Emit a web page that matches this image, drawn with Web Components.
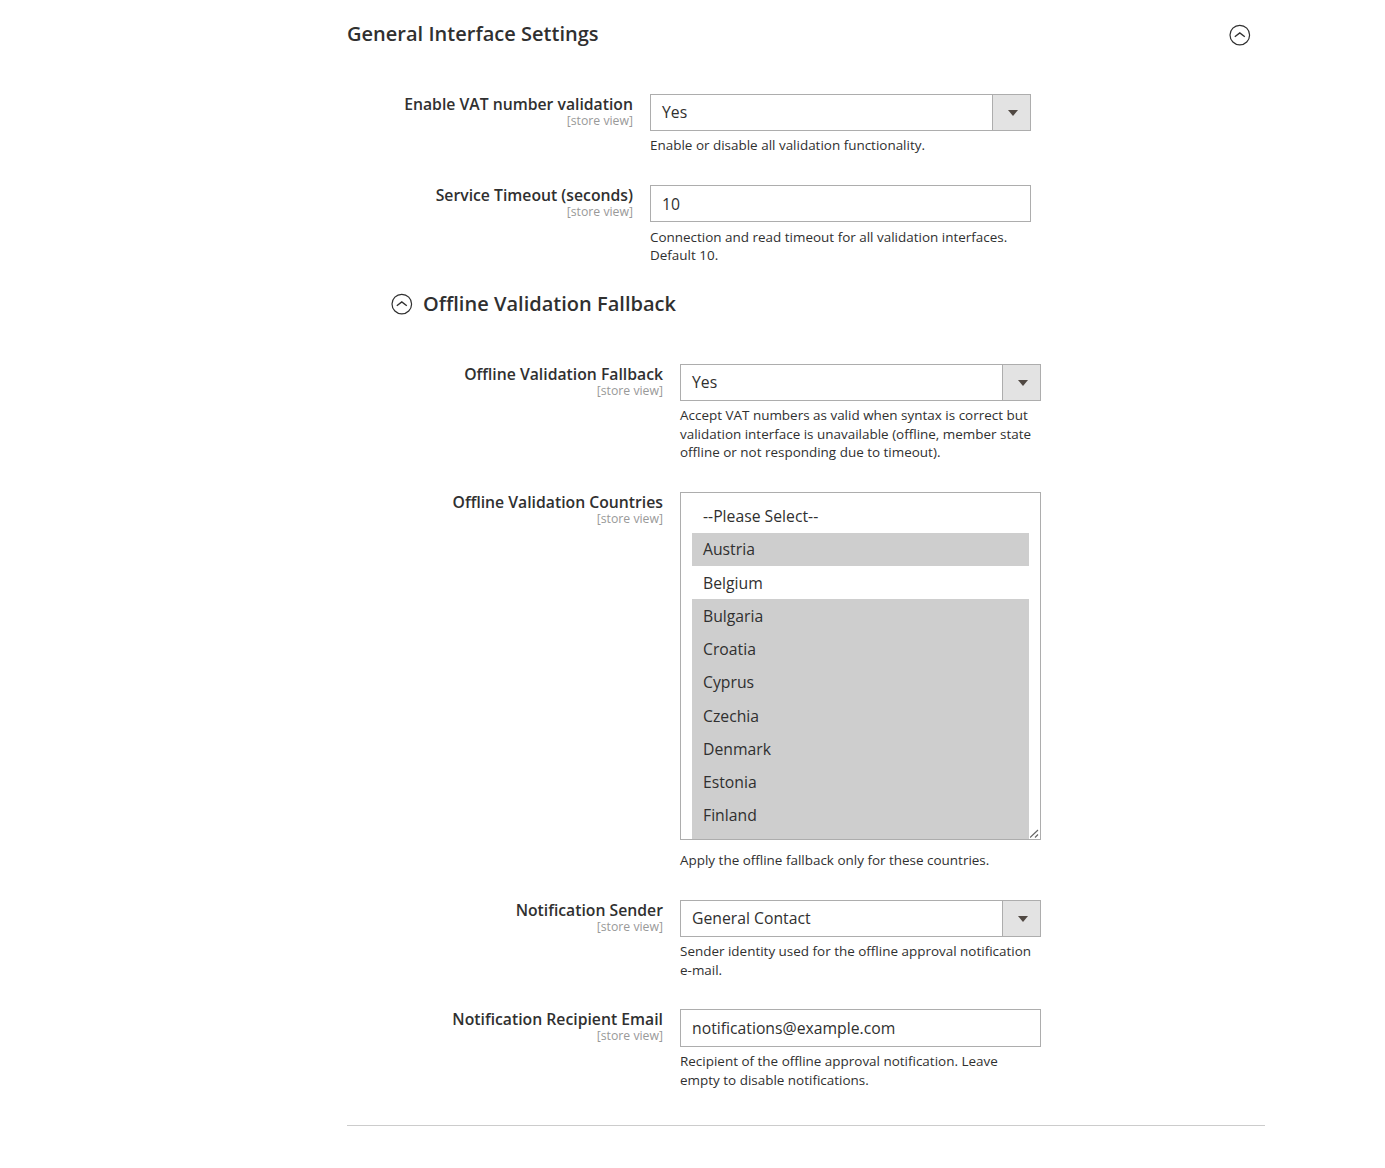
<!DOCTYPE html>
<html lang="en">
<head>
<meta charset="utf-8">
<title>General Interface Settings</title>
<style>
html, body { margin: 0; background: #fff; }
body { font-family: "Open Sans", sans-serif; color: #303030; font-size: 14px; }
main { display: block; width: 918px; margin-left: 347px; }
</style>
</head>
<body>
<main>
    <section-head level="1" style="height:94px">General Interface Settings</section-head>

    <config-field label="Enable VAT number validation" offset="286" style="height:91px">
        <select-box value="Yes"></select-box>
        <span slot="note">Enable or disable all validation functionality.</span>
    </config-field>
    <config-field label="Service Timeout (seconds)" offset="286" style="height:91px">
        <text-box value="10" style="padding-top:1px"></text-box>
        <span slot="note" style="display:block;line-height:18px;padding-top:1px">Connection and read timeout for all validation interfaces.<br>Default 10.</span>
    </config-field>

    <section-head level="2" style="height:88px">Offline Validation Fallback</section-head>

    <config-field label="Offline Validation Fallback" offset="316" style="height:128px">
        <select-box value="Yes"></select-box>
        <span slot="note">Accept VAT numbers as valid when syntax is correct but validation interface is unavailable (offline, member state offline or not responding due to timeout).</span>
    </config-field>
    <config-field label="Offline Validation Countries" offset="316" style="height:408px">
        <multi-box selected="Austria,Bulgaria,Croatia,Cyprus,Czechia,Denmark,Estonia,Finland"
                   options="--Please Select--,Austria,Belgium,Bulgaria,Croatia,Cyprus,Czechia,Denmark,Estonia,Finland"></multi-box>
        <span slot="note" style="display:block;padding-top:6px">Apply the offline fallback only for these countries.</span>
    </config-field>
    <config-field label="Notification Sender" offset="316" style="height:109px">
        <select-box value="General Contact"></select-box>
        <span slot="note">Sender identity used for the offline approval notification e-mail.</span>
    </config-field>
    <config-field label="Notification Recipient Email" offset="316" style="height:116px">
        <text-box value="notifications@example.com" style="height:38px"></text-box>
        <span slot="note">Recipient of the offline approval notification. Leave empty to disable notifications.</span>
    </config-field>

    <hr style="margin:0;border:0;border-top:1px solid #ccc">
</main>

<script>
const arrowIcon = `<svg width="22" height="22" viewBox="0 0 22 22" fill="none" stroke="#303030">
    <circle cx="10.8" cy="11.1" r="9.8" stroke-width="1.2"/>
    <path d="M5.8 12.8 10.8 9l5 3.8" stroke-width="1.4"/></svg>`;

class SectionHead extends HTMLElement {
    connectedCallback() {
        const nested = this.getAttribute('level') === '2';
        this.attachShadow({mode: 'open'}).innerHTML = `
        <style>
            :host { display: block; box-sizing: border-box; }
            .row { display: flex; align-items: center; height: 22px; }
            .title { font-size: 20px; font-weight: 600; letter-spacing: .02px; line-height: 22px; flex: 1; }
            :host([level="1"]) .row { padding-top: 24px; padding-right: 14px; }
            :host([level="1"]) .title { margin-bottom: 2px; }
            :host([level="2"]) .row { padding-top: 17px; padding-left: 44px; gap: 10px; }
            svg { display: block; }
        </style>
        <div class="row">
            ${nested ? arrowIcon : ''}
            <div class="title"><slot></slot></div>
            ${nested ? '' : arrowIcon}
        </div>`;
    }
}

class ConfigField extends HTMLElement {
    connectedCallback() {
        const offset = this.getAttribute('offset');
        this.attachShadow({mode: 'open'}).innerHTML = `
        <style>
            :host { display: flex; box-sizing: border-box; gap: 17px; }
            .label { width: ${offset}px; flex: none; text-align: right; padding-top: 1px; }
            .name { font-size: 15.75px; font-weight: 600; line-height: 19px; }
            .scope { font-size: 12.25px; line-height: 14px; color: #999; margin-top: 0; }
            .value { width: ${offset === '286' ? 381 : 361}px; flex: none; }
            .note { font-size: 13.46px; line-height: 18.5px; margin-top: 5px; padding-right: 5px; }
        </style>
        <div class="label">
            <div class="name">${this.getAttribute('label')}</div>
            <div class="scope">[store view]</div>
        </div>
        <div class="value">
            <slot></slot>
            <div class="note"><slot name="note"></slot></div>
        </div>`;
    }
}

class SelectBox extends HTMLElement {
    connectedCallback() {
        this.attachShadow({mode: 'open'}).innerHTML = `
        <style>
            :host { display: flex; box-sizing: border-box; height: 37px; border: 1px solid #adadad; background: #fff; }
            .text { flex: 1; padding-left: 11px; font-size: 15.75px; line-height: 35px; }
            .btn { box-sizing: border-box; width: 38px; padding-left: 2px; background: #e3e3e3; border-left: 1px solid #adadad; display: flex; align-items: center; justify-content: center; }
            .btn i { width: 0; height: 0; border-style: solid; border-width: 6px 5px 0; border-color: #514943 transparent transparent; }
        </style>
        <div class="text">${this.getAttribute('value')}</div>
        <div class="btn"><i></i></div>`;
    }
}

class TextBox extends HTMLElement {
    connectedCallback() {
        this.attachShadow({mode: 'open'}).innerHTML = `
        <style>
            :host { display: flex; align-items: center; box-sizing: border-box; height: 37px; border: 1px solid #adadad; background: #fff; padding-left: 11px; font-size: 15.75px; }
        </style>
        <div>${this.getAttribute('value')}</div>`;
    }
}

class MultiBox extends HTMLElement {
    connectedCallback() {
        const selected = this.getAttribute('selected').split(',');
        const rows = this.getAttribute('options').split(',').map(name =>
            `<div class="opt${selected.includes(name) ? ' on' : ''}">${name}</div>`).join('');
        this.attachShadow({mode: 'open'}).innerHTML = `
        <style>
            :host { display: block; position: relative; box-sizing: border-box; height: 348px; border: 1px solid #adadad; background: #fff; padding: 6.7px 11px 0; overflow: hidden; }
            .opt { box-sizing: border-box; height: 33.25px; line-height: 33.25px; padding: .4px 0 0 11px; font-size: 15.75px; }
            .on { background: #cecece; }
            .opt:last-of-type { height: 50px; }
            svg { position: absolute; right: 0; bottom: 0; display: block; }
        </style>
        ${rows}
        <svg width="10" height="10" viewBox="0 0 10 10" fill="none" stroke="#666" stroke-width="1.2">
            <path d="M0 8.5 8 1M5 8.5 8 5.5"/>
        </svg>`;
    }
}

customElements.define('section-head', SectionHead);
customElements.define('config-field', ConfigField);
customElements.define('select-box', SelectBox);
customElements.define('text-box', TextBox);
customElements.define('multi-box', MultiBox);
</script>
</body>
</html>
